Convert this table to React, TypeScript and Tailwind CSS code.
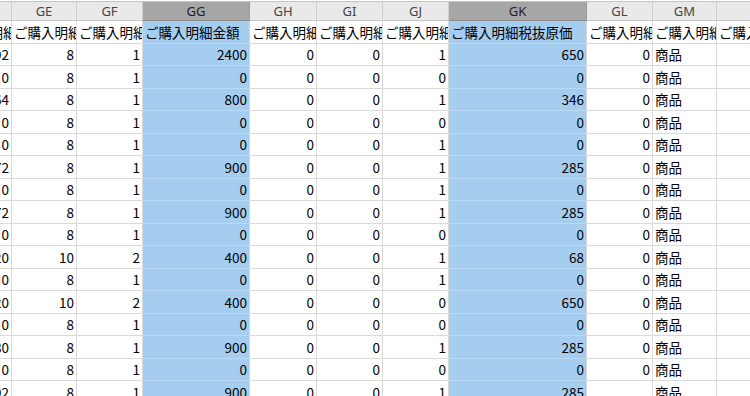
import React from 'react';

type Col = { key: string; w: string; label: string; selected?: boolean };

const COLS: Col[] = [
  { key: 'GD', w: 'w-[65px]', label: 'ご購入明細税込金額' },
  { key: 'GE', w: 'w-[65px]', label: 'ご購入明細税率' },
  { key: 'GF', w: 'w-[66px]', label: 'ご購入明細数量' },
  { key: 'GG', w: 'w-[107px]', label: 'ご購入明細金額', selected: true },
  { key: 'GH', w: 'w-[67px]', label: 'ご購入明細割引額' },
  { key: 'GI', w: 'w-[66px]', label: 'ご購入明細ポイント' },
  { key: 'GJ', w: 'w-[66px]', label: 'ご購入明細課税区分' },
  { key: 'GK', w: 'w-[138px]', label: 'ご購入明細税抜原価', selected: true },
  { key: 'GL', w: 'w-[66px]', label: 'ご購入明細送料' },
  { key: 'GM', w: 'w-[64px]', label: 'ご購入明細種別' },
  { key: 'GN', w: 'w-[90px]', label: 'ご購入明細備考' },
];

// GD .. GN, GM is text
const ROWS: (string | number)[][] = [
  [2592, 8, 1, 2400, 0, 0, 1, 650, 0, '商品', ''],
  [0, 8, 1, 0, 0, 0, 0, 0, 0, '商品', ''],
  [864, 8, 1, 800, 0, 0, 1, 346, 0, '商品', ''],
  [0, 8, 1, 0, 0, 0, 0, 0, 0, '商品', ''],
  [0, 8, 1, 0, 0, 0, 1, 0, 0, '商品', ''],
  [972, 8, 1, 900, 0, 0, 1, 285, 0, '商品', ''],
  [0, 8, 1, 0, 0, 0, 1, 0, 0, '商品', ''],
  [972, 8, 1, 900, 0, 0, 1, 285, 0, '商品', ''],
  [0, 8, 1, 0, 0, 0, 0, 0, 0, '商品', ''],
  [420, 10, 2, 400, 0, 0, 1, 68, 0, '商品', ''],
  [0, 8, 1, 0, 0, 0, 1, 0, 0, '商品', ''],
  [420, 10, 2, 400, 0, 0, 0, 650, 0, '商品', ''],
  [0, 8, 1, 0, 0, 0, 0, 0, 0, '商品', ''],
  [980, 8, 1, 900, 0, 0, 1, 285, 0, '商品', ''],
  [0, 8, 1, 0, 0, 0, 0, 0, 0, '商品', ''],
  [2592, 8, 1, 900, 0, 0, 1, 285, '', '商品', ''],
];

const cellTone = (selected?: boolean) =>
  selected ? 'bg-[#a5cdf0] border-r-[#d4d4d4] border-b-[#bcd9f3]' : 'bg-white border-[#dadada]';

export default function App() {
  return (
    <div className="w-[750px] h-[396px] overflow-hidden bg-white pt-[1px] font-['Noto_Sans_CJK_JP','Noto_Sans',sans-serif]">
      {/* sheet is scrolled: GD is mostly off-screen */}
      <div className="ml-[-53px] w-max">
        {/* column letters */}
        <div className="flex h-[20px] border-t border-[#c4c4c4]">
          {COLS.map((c) => (
            <div
              key={c.key}
              className={`${c.w} shrink-0 flex items-center justify-center border-r border-b text-[13px] leading-none font-['Noto_Sans','Liberation_Sans',sans-serif] ${
                c.selected
                  ? 'bg-[#a6a6a6] border-r-[#9a9a9a] border-b-[#8c8c8c] text-[#1f1f1f]'
                  : 'bg-[#e9e9e9] border-r-[#cfcfcf] border-b-[#c8c8c8] text-[#444444]'
              }`}
            >
              {c.key}
            </div>
          ))}
        </div>

        {/* field names */}
        <div className="flex h-[22.5px]">
          {COLS.map((c) => (
            <div
              key={c.key}
              className={`${c.w} shrink-0 overflow-hidden whitespace-nowrap flex items-center pl-[2px] border-r border-b text-[13.5px] text-black ${cellTone(c.selected)}`}
            >
              {c.label}
            </div>
          ))}
        </div>

        {/* data */}
        {ROWS.map((row, ri) => (
          <div key={ri} className="flex h-[22.5px]">
            {COLS.map((c, ci) => {
              const v = row[ci];
              const isText = typeof v === 'string' && v !== '';
              return (
                <div
                  key={c.key}
                  className={`${c.w} shrink-0 overflow-hidden whitespace-nowrap flex items-center border-r border-b text-[13.5px] text-black ${
                    isText ? 'justify-start pl-[2px]' : 'justify-end pr-[2px]'
                  } ${cellTone(c.selected)}`}
                >
                  {v}
                </div>
              );
            })}
          </div>
        ))}
      </div>
    </div>
  );
}
